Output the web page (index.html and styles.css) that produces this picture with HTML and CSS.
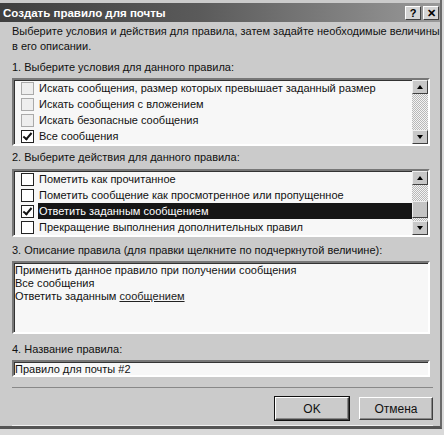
FILE: index.html
```html
<!DOCTYPE html>
<html lang="ru">
<head>
    <meta charset="UTF-8">
    <title>Создать правило для почты</title>
    <link rel="stylesheet" href="styles.css">
</head>
<body>

    <div class="window">
        <div class="titlebar">
            <div class="title">Создать правило для почты</div>
            <div class="title-buttons">
                <button class="tbtn">?</button>
                <button class="tbtn">&#x2715;</button>
            </div>
        </div>

        <div class="content">
            <p class="intro">Выберите условия и действия для правила, затем задайте необходимые величины<br>в его описании.</p>

            <div class="label">1. Выберите условия для данного правила:</div>
            <div class="listbox">
                <div class="rows">
                    <div class="row"><span class="check dim"></span>Искать сообщения, размер которых превышает заданный размер</div>
                    <div class="row"><span class="check dim"></span>Искать сообщения с вложением</div>
                    <div class="row"><span class="check dim"></span>Искать безопасные сообщения</div>
                    <div class="row"><span class="check checked"></span>Все сообщения</div>
                </div>
                <div class="scrollbar">
                    <div class="arrow up"></div>
                    <div class="track"></div>
                    <div class="arrow down"></div>
                </div>
            </div>

            <div class="label label-tight">2. Выберите действия для данного правила:</div>
            <div class="listbox">
                <div class="rows">
                    <div class="row"><span class="check"></span>Пометить как прочитанное</div>
                    <div class="row"><span class="check"></span>Пометить сообщение как просмотренное или пропущенное</div>
                    <div class="row"><span class="check checked"></span><span class="selected">Ответить заданным сообщением</span></div>
                    <div class="row"><span class="check"></span>Прекращение выполнения дополнительных правил</div>
                </div>
                <div class="scrollbar">
                    <div class="arrow up"></div>
                    <div class="track"><div class="thumb"></div></div>
                    <div class="arrow down"></div>
                </div>
            </div>

            <div class="label">3. Описание правила (для правки щелкните по подчеркнутой величине):</div>
            <div class="description">
                Применить данное правило при получении сообщения<br>
                Все сообщения<br>
                Ответить заданным <a href="#" class="link">сообщением</a>
            </div>

            <div class="label label-name">4. Название правила:</div>
            <input class="name-input" type="text" value="Правило для почты #2">
        </div>

        <div class="footer">
            <button class="btn btn-default">OK</button>
            <button class="btn">Отмена</button>
        </div>
    </div>

</body>
</html>
```

FILE: styles.css
```css
body {
    margin: 0;
    background-color: #d9d9d9;
    font-family: "Liberation Sans", Arial, sans-serif;
    font-size: 11px;
    color: #111;
}
.window {
    width: 442px;
    height: 429px;
    background-color: #cbcbcb;
    border-right: 2px solid #6a6a6a;
    border-bottom: 3px solid #555;
    box-sizing: border-box;
    display: flex;
    flex-direction: column;
    overflow: hidden;
}
.titlebar {
    margin-top: 3px;
    height: 19px;
    flex-shrink: 0;
    background: linear-gradient(90deg, #3f3f3f, #5a5a5a 45%, #999 100%);
    color: white;
    display: flex;
    justify-content: space-between;
    align-items: center;
    padding: 0 1px 0 3px;
}
.title {
    font-weight: bold;
    font-size: 11.5px;
}
.title-buttons {
    display: flex;
    gap: 2px;
}
.tbtn {
    width: 16px;
    height: 14px;
    padding: 0;
    font-family: "Liberation Sans", Arial, sans-serif;
    font-size: 11px;
    font-weight: bold;
    line-height: 12px;
    color: #000;
    background-color: #d4d4d4;
    border: 1px solid;
    border-color: #fff #404040 #404040 #fff;
}
.content {
    padding: 2px 10px 0 12px;
}
.intro {
    margin: 0;
    line-height: 15px;
    white-space: nowrap;
}
.label {
    line-height: 15px;
    margin-top: 6px;
    margin-bottom: 3px;
    white-space: nowrap;
}
.label-tight {
    margin-top: 4px;
    margin-bottom: 4px;
}
.label-name {
    margin-top: 8px;
    margin-bottom: 3px;
}
.listbox {
    display: flex;
    height: 68px;
    box-sizing: border-box;
    background-color: #f7f7f7;
    border: 2px solid;
    border-color: #777 #fff #fff #777;
    box-shadow: inset 1px 1px 0 #333;
}
.rows {
    flex: 1;
}
.row {
    display: flex;
    align-items: center;
    height: 16px;
    padding-left: 7px;
    white-space: nowrap;
}
.check {
    width: 11px;
    height: 11px;
    border: 1px solid #222;
    background-color: #fff;
    margin-right: 5px;
    flex-shrink: 0;
    position: relative;
}
.check.dim {
    border-color: #aaa;
    background-color: #eee;
}
.check.checked::after {
    content: "";
    position: absolute;
    left: 3px;
    top: 0;
    width: 3px;
    height: 7px;
    border: solid #111;
    border-width: 0 2px 2px 0;
    transform: rotate(40deg);
}
.selected {
    flex: 1;
    align-self: stretch;
    display: flex;
    align-items: center;
    background-color: #161616;
    color: #fff;
    margin-left: -1px;
    padding-left: 1px;
}
.scrollbar {
    width: 16px;
    display: flex;
    flex-direction: column;
}
.arrow {
    height: 14px;
    background-color: #c8c8c8;
    border: 1px solid;
    border-color: #eee #404040 #404040 #eee;
    box-sizing: border-box;
    position: relative;
}
.arrow::after {
    content: "";
    position: absolute;
    left: 4px;
    top: 4px;
    border-left: 3px solid transparent;
    border-right: 3px solid transparent;
}
.arrow.up::after {
    border-bottom: 4px solid #000;
}
.arrow.down::after {
    border-top: 4px solid #000;
}
.track {
    flex: 1;
    background: repeating-conic-gradient(#f4f4f4 0 25%, #b8b8b8 0 50%) 0 0 / 2px 2px;
    display: flex;
    flex-direction: column;
    justify-content: flex-end;
}
.thumb {
    height: 15px;
    margin-bottom: 3px;
    background-color: #c4c4c4;
    border: 1px solid;
    border-color: #eee #404040 #404040 #eee;
}
.description {
    height: 73px;
    box-sizing: border-box;
    background-color: #f7f7f7;
    border: 2px solid;
    border-color: #777 #fff #fff #777;
    box-shadow: inset 1px 1px 0 #333;
    line-height: 13px;
    padding: 1px 1px;
}
.link {
    color: #222;
}
.name-input {
    display: block;
    width: 100%;
    height: 17px;
    box-sizing: border-box;
    margin: 0;
    padding: 0 1px;
    font-family: "Liberation Sans", Arial, sans-serif;
    font-size: 11px;
    color: #111;
    background-color: #f7f7f7;
    border: 2px solid;
    border-color: #777 #fff #fff #777;
    box-shadow: inset 1px 1px 0 #333;
    outline: none;
}
.footer {
    margin: 10px 7px 0 12px;
    border-top: 1px solid #888;
    box-shadow: 0 1px 0 #f0f0f0;
    padding: 9px 0 5px 0;
    display: flex;
    justify-content: flex-end;
    gap: 10px;
}
.btn {
    width: 74px;
    height: 23px;
    font-family: "Liberation Sans", Arial, sans-serif;
    font-size: 12px;
    color: #111;
    background-color: #cbcbcb;
    border: 1px solid;
    border-color: #fff #404040 #404040 #fff;
    box-shadow: inset -1px -1px 0 #888;
}
.btn-default {
    outline: 1px solid #111;
}
```
